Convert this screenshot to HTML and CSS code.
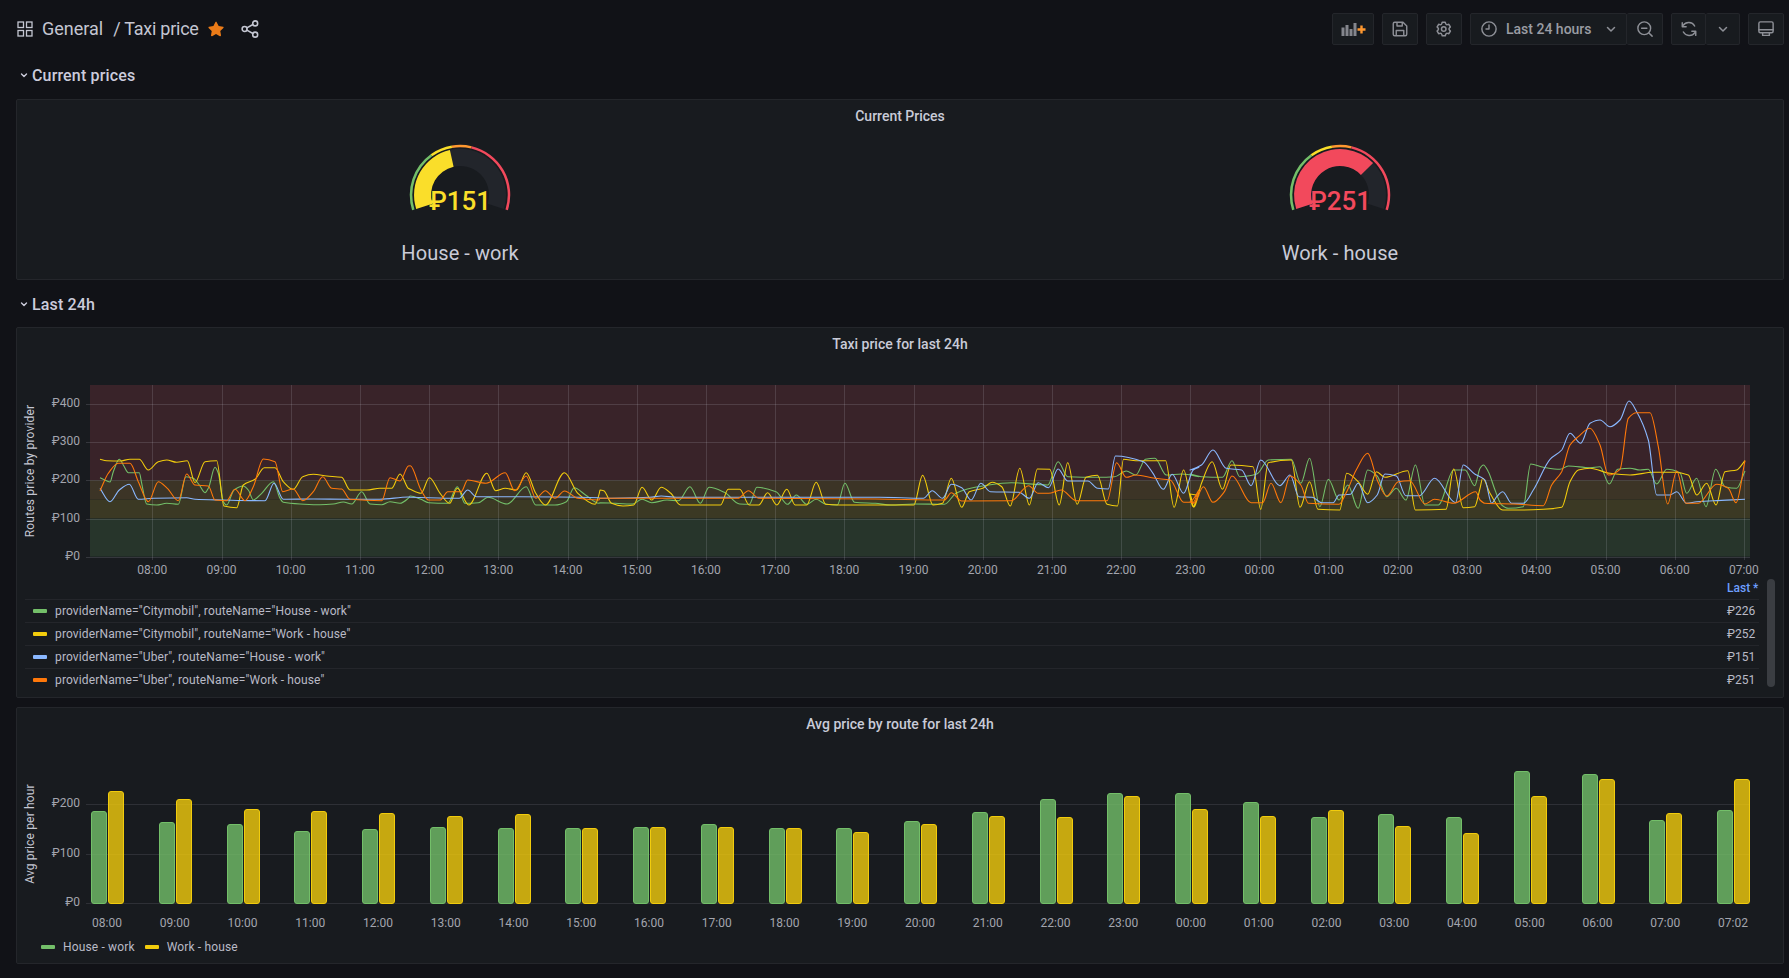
FILE: index.html
```html
<!DOCTYPE html>
<html lang="en">
<head>
<meta charset="utf-8">
<title>Taxi price - Grafana</title>
<link rel="stylesheet" href="styles.css">
</head>
<body>
<div class="page">
  <header class="topbar">
    <div class="crumbs">
      <svg class="ic crumb-ic" viewBox="0 0 16 16"><rect x="1" y="1" width="5.5" height="5.5"/><rect x="9.5" y="1" width="5.5" height="5.5"/><rect x="1" y="9.5" width="5.5" height="5.5"/><rect x="9.5" y="9.5" width="5.5" height="5.5"/></svg>
      <span class="crumb">General</span>
      <span class="crumb crumb-page">/ Taxi price</span>
      <svg class="star" viewBox="1.5 1.5 21 21"><path d="M22,10.1c0.1-0.5-0.3-1.1-0.8-1.1l-5.7-0.8L12.9,3c-0.1-0.2-0.2-0.3-0.4-0.4C12,2.3,11.4,2.5,11.1,3L8.6,8.2L2.9,9C2.6,9,2.4,9.1,2.3,9.3c-0.4,0.4-0.4,1,0,1.4l4.1,4l-1,5.7c0,0.2,0,0.4,0.1,0.6c0.3,0.5,0.9,0.7,1.4,0.4l5.1-2.7l5.1,2.7c0.1,0.1,0.3,0.1,0.5,0.1v0c0.1,0,0.1,0,0.2,0c0.5-0.1,0.9-0.6,0.8-1.2l-1-5.7l4.1-4C21.9,10.5,22,10.3,22,10.1z"/></svg>
      <svg class="ic share" viewBox="0 0 16 16"><circle cx="3.2" cy="8" r="2.2"/><circle cx="12.6" cy="3" r="2.2"/><circle cx="12.6" cy="13" r="2.2"/><path d="M5.2 7 10.6 4M5.2 9 10.6 12"/></svg>
    </div>
    <div class="tools">
      <button class="btn btn-add" type="button">
        <svg class="addpanel" viewBox="0 0 24 13"><rect class="bar-grey" x="0" y="4.5" width="3" height="8.5"/><rect class="bar-grey" x="4" y="2" width="3" height="11"/><rect class="bar-grey" x="8" y="6" width="3" height="7"/><rect class="bar-grey" x="12" y="0" width="3" height="13"/><path class="plus" d="M20 2.5v8M16 6.5h8"/></svg>
      </button>
      <button class="btn" type="button">
        <svg class="ic ic18" viewBox="0 0 24 24"><path d="M5 3h11l5 5v11a2 2 0 0 1-2 2H5a2 2 0 0 1-2-2V5a2 2 0 0 1 2-2zM8 3v5h7V3M7 21v-7h10v7"/></svg>
      </button>
      <button class="btn" type="button">
        <svg class="ic-fill ic18" viewBox="0 0 24 24"><path d="M19.9,12.66a1,1,0,0,1,0-1.32L21.18,9.9a1,1,0,0,0,.12-1.17l-2-3.46a1,1,0,0,0-1.07-.48l-1.88.38a1,1,0,0,1-1.15-.66l-.61-1.83A1,1,0,0,0,13.64,2h-4a1,1,0,0,0-1,.68L8.08,4.51a1,1,0,0,1-1.15.66L5,4.79A1,1,0,0,0,4,5.27L2,8.73A1,1,0,0,0,2.1,9.9l1.27,1.44a1,1,0,0,1,0,1.32L2.1,14.1A1,1,0,0,0,2,15.27l2,3.46a1,1,0,0,0,1.07.48l1.88-.38a1,1,0,0,1,1.15.66l.61,1.83a1,1,0,0,0,1,.68h4a1,1,0,0,0,.95-.68l.61-1.83a1,1,0,0,1,1.15-.66l1.88.38a1,1,0,0,0,1.07-.48l2-3.46a1,1,0,0,0-.12-1.17ZM18.41,14l.8.9-1.28,2.22-1.18-.24a3,3,0,0,0-3.45,2L12.92,20H10.36L10,18.86a3,3,0,0,0-3.45-2l-1.18.24L4.07,14.89l.8-.9a3,3,0,0,0,0-4l-.8-.9L5.35,6.89l1.18.24a3,3,0,0,0,3.45-2L10.36,4h2.56l.38,1.14a3,3,0,0,0,3.45,2l1.18-.24,1.28,2.22-.8.9A3,3,0,0,0,18.41,14ZM11.64,8a4,4,0,1,0,4,4A4,4,0,0,0,11.64,8Zm0,6a2,2,0,1,1,2-2A2,2,0,0,1,11.64,14Z"/></svg>
      </button>
      <div class="btn-group">
        <button class="btn btn-time" type="button">
          <svg class="ic ic18" viewBox="0 0 24 24"><circle cx="12" cy="12" r="9.5"/><path d="M12 6.5V12H8"/></svg>
          <span class="time-label">Last 24 hours</span>
          <svg class="ic chev" viewBox="0 0 12 12"><path d="M2.5 4.5 6 8l3.500-3.500"/></svg>
        </button>
        <button class="btn btn-joined" type="button">
          <svg class="ic ic18" viewBox="0 0 24 24"><circle cx="11" cy="11" r="8.5"/><path d="M7.5 11h7M17.2 17.2 21.5 21.5"/></svg>
        </button>
      </div>
      <div class="btn-group">
        <button class="btn btn-refresh" type="button">
          <svg class="ic ic18" viewBox="0 0 24 24"><path d="M19.5 8A9 9 0 0 0 4.2 7.2L3.2 8.6M3 3.5v5.4h5.2M4.5 16A9 9 0 0 0 19.8 16.8l1-1.4M21 20.5v-5.4h-5.2"/></svg>
        </button>
        <button class="btn btn-refresh btn-joined" type="button">
          <svg class="ic chev" viewBox="0 0 12 12"><path d="M2.5 4.5 6 8l3.500-3.500"/></svg>
        </button>
      </div>
      <button class="btn" type="button">
        <svg class="ic ic18" viewBox="0 0 24 24"><rect x="2.5" y="2.5" width="19" height="14.5" rx="2"/><path d="M2.5 13h19M7.5 17v3.5h9V17"/></svg>
      </button>
    </div>
  </header>

  <div class="row-title">
    <svg class="ic row-chev" viewBox="0 0 16 16"><path d="M5.5 7 8 9.5 10.500 7"/></svg>
    <span>Current prices</span>
  </div>

  <section class="panel panel-gauges">
    <h2 class="panel-title">Current Prices</h2>
    <div class="gauges">
      <div class="gauge-cell">
        <svg class="gauge" data-end="-12.7" data-color="#fade2a" viewBox="0 0 140 86">
          <text class="gauge-value gv-yellow" x="70" y="78">₽151</text>
        </svg>
        <div class="gauge-label">House - work</div>
      </div>
      <div class="gauge-cell">
        <svg class="gauge" data-end="46" data-color="#f2495c" viewBox="0 0 140 86">
          <text class="gauge-value gv-red" x="70" y="78">₽251</text>
        </svg>
        <div class="gauge-label">Work - house</div>
      </div>
    </div>
  </section>

  <div class="row-title row-second">
    <svg class="ic row-chev" viewBox="0 0 16 16"><path d="M5.5 7 8 9.5 10.500 7"/></svg>
    <span>Last 24h</span>
  </div>

  <section class="panel panel-lines">
    <h2 class="panel-title">Taxi price for last 24h</h2>
    <svg id="lines" class="chart chart-lines" viewBox="17 360 1766 216"></svg>
    <div class="legend-table">
      <div class="lg-head"><span class="lg-last">Last *</span></div>
      <div class="lg-row"><i class="swatch sw-green"></i><span class="lg-name">providerName="Citymobil", routeName="House - work"</span><span class="lg-val">₽226</span></div>
      <div class="lg-row"><i class="swatch sw-yellow"></i><span class="lg-name">providerName="Citymobil", routeName="Work - house"</span><span class="lg-val">₽252</span></div>
      <div class="lg-row"><i class="swatch sw-blue"></i><span class="lg-name">providerName="Uber", routeName="House - work"</span><span class="lg-val">₽151</span></div>
      <div class="lg-row"><i class="swatch sw-orange"></i><span class="lg-name">providerName="Uber", routeName="Work - house"</span><span class="lg-val">₽251</span></div>
    </div>
    <div class="scrollbar"></div>
  </section>

  <section class="panel panel-bars">
    <h2 class="panel-title">Avg price by route for last 24h</h2>
    <svg id="bars" class="chart chart-bars" viewBox="17 740 1766 195"></svg>
    <div class="legend-inline">
      <i class="swatch sw-green"></i><span class="li-name">House - work</span>
      <i class="swatch sw-yellow"></i><span class="li-name">Work - house</span>
    </div>
  </section>
</div>
<script src="script.js"></script>
</body>
</html>
```
FILE: styles.css
```css
* { box-sizing: border-box; }
html, body { margin: 0; height: 100%; }
body {
  background: #111217;
  color: #ccccdc;
  font-family: Roboto, "Liberation Sans", sans-serif;
  overflow: hidden;
}
.page { padding: 13px 5px 0 16px; }

/* top bar */
.topbar { display: flex; align-items: center; justify-content: space-between; height: 32px; }
.crumbs { display: flex; align-items: center; }
.crumb { font-size: 18px; line-height: 32px; color: #c4c6d2; }
.crumb + .crumb { margin-left: 10px; }
.crumb-page { letter-spacing: -.25px; }
.crumb-ic { width: 16px; height: 16px; margin: 0 9px 0 1px; }
.star { width: 16px; height: 16px; margin-left: 9px; fill: #eb7b18; }
.share { width: 18px; height: 18px; margin-left: 17px; }
.ic { fill: none; stroke: #8e9097; stroke-width: 1.3; stroke-linecap: round; stroke-linejoin: round; }
.ic.share { stroke: #c4c6d2; stroke-width: 1.4; }
.ic.crumb-ic { stroke: #c4c6d2; stroke-linecap: butt; stroke-linejoin: miter; }
.ic18 { width: 18px; height: 18px; }
.ic18.ic { stroke-width: 1.9; }
.ic-fill { fill: #8e9097; }
.tools { display: flex; gap: 8px; }
.btn {
  display: flex; align-items: center; justify-content: center;
  width: 36px; height: 32px; padding: 0;
  background: #181b1f;
  border: 1px solid #24262b;
  border-radius: 2px;
  font-family: inherit;
}
.btn-add { width: 42px; }
.addpanel { width: 25px; height: 13px; }
.bar-grey { fill: #84868d; }
.plus { fill: none; stroke: #ff9830; stroke-width: 2.4; }
.btn-group { display: flex; }
.btn-joined { border-left: 0; }
.btn-time { width: 157px; justify-content: flex-start; padding-left: 9px; }
.time-label { margin-left: 8px; width: 99px; text-align: left; font-size: 14px; font-weight: 500; color: #9a9ca3; }
.chev { width: 12px; height: 12px; stroke-width: 1.5; }
.btn-refresh { width: 35px; }
.btn-refresh + .btn-refresh { width: 34px; }

/* rows */
.row-title {
  display: flex; align-items: center;
  height: 28px; margin: 16px 0 10px;
  font-size: 16px; font-weight: 500; letter-spacing: .15px; color: #ccccdc;
}
.row-second { margin: 10px 0 9px; }
.ic.row-chev { width: 16px; height: 16px; stroke: #ccccdc; stroke-width: 1.4; }

/* panels */
.panel {
  position: relative;
  background: #181b1f;
  border: 1px solid #24262b;
  border-radius: 2px;
}
.panel-title {
  margin: 0; height: 32px;
  font-size: 14px; font-weight: 500; line-height: 32px; text-align: center; color: #c9cbd8;
}
.panel-gauges { height: 181px; }
.panel-lines { height: 371px; margin-bottom: 9px; }
.panel-bars { height: 257px; }

.gauges { display: grid; grid-template-columns: 1fr 1fr; padding: 0 3px; }
.gauge-cell { display: flex; flex-direction: column; align-items: center; }
.gauge { display: block; width: 140px; height: 86px; }
.gauge-value { font-size: 26px; font-weight: 500; text-anchor: middle; }
.gv-yellow { fill: #fade2a; }
.gv-red { fill: #f2495c; }
.gauge-track { fill: #22252b; }
.gauge-label { margin-top: 20px; font-size: 20px; line-height: 30px; letter-spacing: .08px; color: #c9cbd8; }

/* charts */
.chart { display: block; width: 1766px; }
.chart-lines { height: 216px; }
.chart-bars { height: 195px; }
.grid { stroke: rgba(204,204,220,.16); stroke-width: 1; }
.grid-bars { stroke: rgba(204,204,220,.12); }
.axis { font-size: 12px; fill: #a3a5ae; }
.axis-y { text-anchor: end; }
.axis-x { text-anchor: middle; }
.axis-title { font-size: 12px; letter-spacing: .17px; fill: #c4c6d2; text-anchor: middle; }
.band-red { fill: #392329; }
.band-orange { fill: #3c3426; }
.band-yellow { fill: #3b3924; }
.band-green { fill: #27352b; }
.line { fill: none; stroke-width: 1.1; stroke-linejoin: round; }
.s-green { stroke: #73bf69; }
.s-yellow { stroke: #f2cc0c; }
.s-blue { stroke: #8ab8ff; }
.s-orange { stroke: #ff780a; }
.bar { stroke-width: 1; }
.bar-g { fill: rgba(115,191,105,.8); stroke: #73bf69; }
.bar-y { fill: rgba(242,204,12,.8); stroke: #f2cc0c; }

/* legends */
.legend-table { margin: 0 24px 0 8px; font-size: 12px; }
.lg-head { display: flex; justify-content: flex-end; align-items: center; height: 23px; }
.lg-last { width: 32px; font-weight: 500; color: #6e9fff; white-space: nowrap; }
.lg-row {
  display: flex; align-items: center; height: 23px;
  border-top: 1px solid #24262b;
  color: #b9bac6;
}
.lg-name { flex: 1; margin-left: 8px; letter-spacing: .14px; }
.lg-val { width: 32px; }
.swatch { display: block; width: 14px; height: 4px; border-radius: 1px; flex: none; }
.lg-row .swatch { margin-left: 8px; }
.sw-green { background: #73bf69; }
.sw-yellow { background: #f2cc0c; }
.sw-blue { background: #8ab8ff; }
.sw-orange { background: #ff780a; }
.scrollbar {
  position: absolute; left: 1750px; top: 251px;
  width: 8px; height: 108px;
  border-radius: 4px;
  background: #3a3d42;
}
.legend-inline { display: flex; align-items: center; height: 24px; padding-left: 24px; font-size: 12px; letter-spacing: .15px; color: #b9bac6; }
.li-name { margin: 0 10px 0 8px; }
```
FILE: script.js
```js
const NS = 'http://www.w3.org/2000/svg';
function el(parent, tag, attrs, text) {
  const n = document.createElementNS(NS, tag);
  for (const k in attrs) n.setAttribute(k, attrs[k]);
  if (text !== undefined) n.textContent = text;
  parent.appendChild(n);
  return n;
}
function fx(v) { return v.toFixed(1); }

/* gauges */
function polar(r, deg) {
  const a = (deg - 90) * Math.PI / 180;
  return [70 + r * Math.cos(a), 63 + r * Math.sin(a)];
}
function band(r0, r1, a0, a1) {
  const large = a1 - a0 > 180 ? 1 : 0;
  const p = [polar(r1, a0), polar(r1, a1), polar(r0, a1), polar(r0, a0)];
  return 'M' + fx(p[0][0]) + ' ' + fx(p[0][1]) +
    'A' + r1 + ' ' + r1 + ' 0 ' + large + ' 1 ' + fx(p[1][0]) + ' ' + fx(p[1][1]) +
    'L' + fx(p[2][0]) + ' ' + fx(p[2][1]) +
    'A' + r0 + ' ' + r0 + ' 0 ' + large + ' 0 ' + fx(p[3][0]) + ' ' + fx(p[3][1]) + 'Z';
}
const START = -107.6, FINISH = 107.6;
document.querySelectorAll('.gauge').forEach(function (svg) {
  const text = svg.querySelector('text');
  const g = document.createElementNS(NS, 'g');
  svg.insertBefore(g, text);
  el(g, 'path', { d: band(29, 46, START, FINISH), class: 'gauge-track' });
  el(g, 'path', { d: band(29, 46, START, parseFloat(svg.dataset.end)), fill: svg.dataset.color });
  [[START, -35.7, '#73bf69'], [-35.7, -9.5, '#fade2a'], [-9.5, 13.6, '#ff9830'], [13.6, FINISH, '#f2495c']]
    .forEach(function (s) { el(g, 'path', { d: band(47.7, 50.2, s[0], s[1]), fill: s[2] }); });
});

/* time series: traced points, grouped by the x/y scale they were read at */
const A = [80, 430, 3, 3], B = [0, 320, 2.613, 3], C = [600, 370, 2.613, 3], D = [1190, 370, 2.617, 3], E = [1480, 390, 3, 3];
const SERIES = [
  ['s-green', [
    [A, [60,143,70,148,90,156,100,125,118,88,130,105,145,128,178,128,185,160,200,222,230,225,260,220,295,223,318,140,340,145,358,165,375,188,385,175,405,112,415,130,430,215,440,225,462,180,490,168,505,180,520,210,545,190,580,155,600,205,610,217,660,222,720,224,760,222,790,216,815,222,845,185,870,222,905,224,930,215,960,220,985,205]],
    [B, [1072,528,1100,538,1120,548,1170,550,1195,500,1215,550,1250,548,1275,532,1325,552,1375,500,1400,555,1450,555,1480,545,1500,503,1530,525,1565,550]],
    [C, [0,398,40,400,85,402,110,388,135,398,175,390,205,392,235,350,262,400,285,352,325,367,365,402,390,403,410,352,460,365,490,403,513,375,540,403,565,388,590,403,620,405,640,340,665,397,720,400,760,405,820,402,900,403,930,370,960,357,1000,348,1075,338,1170,345,1197,275,1222,320,1300,322,1345,320,1375,303,1400,315,1425,268,1450,265,1480,315,1520,312,1565,320]],
    [D, [0,312,30,320,85,322,110,272,130,320,175,312,205,270,265,268,290,340,313,265,340,410,362,328,390,390,413,345,440,415,465,300,490,318,515,380,540,355,565,390,590,285,615,405,650,405,690,300,720,300,745,347]],
    [E, [0,235,10,225,25,245,45,300,65,345,85,355,130,350,152,222,190,232,240,238,265,228,330,233,360,230,388,282,413,238,450,235,480,240,505,238,530,282,560,238,600,248,620,310,650,265,678,350,707,238,735,290,770,295,795,243]]
  ]],
  ['s-yellow', [
    [A, [60,88,80,92,120,93,150,88,178,88,205,120,235,95,260,90,290,97,322,92,345,158,375,95,410,92,432,228,470,233,490,165,525,148,553,113,585,113,610,155,640,178,668,140,700,133,740,138,785,142,810,180,860,180,900,175,935,175,960,132,985,175]],
    [B, [1072,508,1100,520,1122,473,1150,520,1175,550,1195,505,1225,555,1272,460,1295,512,1320,505,1350,510,1375,458,1400,520,1425,555,1475,458,1510,520,1555,553,1566,520]],
    [C, [0,360,10,362,30,400,60,408,88,405,110,352,135,390,160,352,185,370,210,405,315,405,335,358,365,358,390,405,415,405,438,368,462,405,488,358,510,405,540,405,565,337,590,403,625,405,820,405,843,316,870,405,895,400,918,325,945,412,965,365,1000,355,1025,337,1050,350,1072,408,1097,295,1122,405,1143,297,1175,298,1200,405,1222,278,1247,403,1270,322,1300,316,1325,403,1352,408,1368,268,1400,272,1478,272,1500,412,1525,300,1550,410,1565,375]],
    [D, [0,372,10,412,30,340,58,275,85,358,107,285,165,290,185,418,205,278,265,270,288,412,313,335,335,418,392,420,410,310,440,335,465,373,488,305,510,322,570,302,590,420,670,418,690,297,715,413,745,410]],
    [E, [0,295,8,265,30,310,68,360,120,360,190,358,245,352,270,275,295,240,330,235,390,250,450,255,520,247,585,247,625,255,650,315,680,280,708,345,735,245,770,240,795,212]]
  ]],
  ['s-blue', [
    [A, [60,175,90,215,118,180,148,163,175,208,220,205,320,203,345,208,430,210,555,212,582,160,610,208,700,207,800,208,900,208,985,201]],
    [B, [1072,532,1120,533,1200,535,1222,510,1245,530,1350,530,1565,533]],
    [C, [0,385,130,382,160,378,200,382,330,382,540,382,730,382,845,385,868,362,895,385,918,343,945,353,970,390,995,340,1020,365,1095,367,1122,385,1145,338,1172,353,1197,297,1222,333,1275,333,1300,355,1328,357,1347,258,1420,275,1445,310,1472,358,1495,313,1525,370,1550,300,1565,292]],
    [D, [0,300,30,285,60,240,95,295,135,300,160,347,185,270,235,347,262,315,285,380,320,382,345,398,375,398,390,375,420,373,440,340,465,398,490,375,510,312,540,318,565,377,600,377,640,325,695,398,715,285,745,312]],
    [E, [0,260,15,270,35,340,50,320,68,305,95,340,130,340,160,300,210,208,245,180,270,130,302,160,330,100,360,90,390,110,420,90,447,33,470,65,505,150,530,315,570,315,590,305,620,340,650,335,700,332,795,328]]
  ]],
  ['s-orange', [
    [A, [60,182,85,130,115,100,150,100,175,155,205,215,235,155,262,175,295,212,320,132,345,165,385,168,405,210,440,212,465,178,495,212,520,170,550,87,585,95,608,185,640,177,668,212,700,185,728,140,755,175,785,177,810,208,905,212,930,143,960,153,985,108]],
    [B, [1072,437,1100,510,1120,540,1150,540,1170,515,1205,515,1222,480,1270,490,1320,458,1345,512,1375,468,1400,535,1425,512,1450,535,1475,513,1510,535,1565,540]],
    [C, [0,385,360,385,388,362,415,385,720,387,900,390,918,368,945,393,1075,392,1120,347,1145,370,1172,370,1205,360,1245,392,1325,392,1350,278,1375,322,1400,315,1450,325,1490,330,1525,397,1550,397,1565,360]],
    [D, [0,395,10,400,35,350,60,397,90,365,110,318,160,398,190,398,212,340,238,398,262,318,290,345,310,400,390,403,410,365,435,300,465,250,490,330,515,378,545,335,575,332,615,402,640,388,690,400,748,365]],
    [E, [0,330,15,340,100,342,190,347,215,285,245,245,270,165,295,140,330,115,360,165,385,255,420,238,445,85,470,68,510,68,535,170,563,342,590,243,618,340,655,340,710,283,745,295,768,338,795,212]]
  ]]
];
function toPoints(chunks) {
  const out = [];
  chunks.forEach(function (c) {
    const s = c[0], d = c[1];
    for (let i = 0; i < d.length; i += 2) out.push([s[0] + d[i] / s[2], s[1] + d[i + 1] / s[3]]);
  });
  return out;
}
function monotonePath(p) {
  const n = p.length, dx = [], sl = [], m = [];
  for (let i = 0; i < n - 1; i++) {
    dx[i] = p[i + 1][0] - p[i][0];
    sl[i] = (p[i + 1][1] - p[i][1]) / dx[i];
  }
  m[0] = sl[0]; m[n - 1] = sl[n - 2];
  for (let i = 1; i < n - 1; i++) {
    m[i] = sl[i - 1] * sl[i] <= 0 ? 0 : 2 * sl[i - 1] * sl[i] / (sl[i - 1] + sl[i]);
  }
  let d = 'M' + fx(p[0][0]) + ' ' + fx(p[0][1]);
  for (let i = 0; i < n - 1; i++) {
    const h = dx[i] / 3;
    d += 'C' + fx(p[i][0] + h) + ' ' + fx(p[i][1] + m[i] * h) + ' ' +
      fx(p[i + 1][0] - h) + ' ' + fx(p[i + 1][1] - m[i + 1] * h) + ' ' +
      fx(p[i + 1][0]) + ' ' + fx(p[i + 1][1]);
  }
  return d;
}

const HOURS = ['08','09','10','11','12','13','14','15','16','17','18','19','20','21','22','23','00','01','02','03','04','05','06','07'];

/* line chart */
(function () {
  const svg = document.getElementById('lines');
  const L = 90, R = 1750, T = 385, Y0 = 556.6, K = 0.381;
  const y = function (v) { return Y0 - v * K; };
  [['band-red', T, y(200)], ['band-orange', y(200), y(150)], ['band-yellow', y(150), y(100)], ['band-green', y(100), Y0]]
    .forEach(function (b) { el(svg, 'rect', { class: b[0], x: L, y: b[1], width: R - L, height: b[2] - b[1] }); });
  [0, 100, 200, 300, 400].forEach(function (v) {
    const yy = Math.round(y(v)) + 0.5;
    el(svg, 'line', { class: 'grid', x1: 86, x2: R, y1: yy, y2: yy });
    el(svg, 'text', { class: 'axis axis-y', x: 80, y: y(v) + 3 }, '₽' + v);
  });
  HOURS.forEach(function (h, i) {
    const x = 152.3 + 69.2 * i;
    el(svg, 'line', { class: 'grid', x1: Math.round(x) + 0.5, x2: Math.round(x) + 0.5, y1: T, y2: 560 });
    el(svg, 'text', { class: 'axis axis-x', x: x, y: 573.5 }, h + ':00');
  });
  el(svg, 'text', { class: 'axis-title', transform: 'translate(34 471) rotate(-90)' }, 'Routes price by provider');
  SERIES.forEach(function (s) {
    el(svg, 'path', { class: 'line ' + s[0], d: monotonePath(toPoints(s[1])) });
  });
})();

/* bar chart: bar tops as read on the y scale */
(function () {
  const svg = document.getElementById('bars');
  const TOPS = [[333,273],[366,297],[372,327],[393,333],[387,339],[381,348],[384,342],[384,384],[382,382],[372,382],[385,385],[385,395],[364,371],[337,347],[296,350],[279,288],[280,327],[306,348],[351,330],[342,378],[351,399],[213,288],[222,237],[360,339],[330,237]];
  const Y0 = 903.5, R = 1750;
  [[0, 903.5], [100, 854.5], [200, 804.5]].forEach(function (g) {
    el(svg, 'line', { class: 'grid grid-bars', x1: 86, x2: R, y1: g[1], y2: g[1] });
    el(svg, 'text', { class: 'axis axis-y', x: 80, y: g[1] + 2.5 }, '₽' + g[0]);
  });
  el(svg, 'text', { class: 'axis-title', transform: 'translate(34 834) rotate(-90)' }, 'Avg price per hour');
  const labels = HOURS.map(function (h) { return h + ':00'; }).concat('07:02');
  TOPS.forEach(function (t, i) {
    const c = 107 + 67.75 * i, x0 = Math.round(c - 16) + 0.5, x1 = Math.round(c + 1) + 0.5;
    const yg = Math.round(700 + t[0] / 3) + 0.5, yy = Math.round(700 + t[1] / 3) + 0.5;
    el(svg, 'rect', { class: 'bar bar-g', x: x0, y: yg, width: 15, height: Y0 - yg, rx: 2.5 });
    el(svg, 'rect', { class: 'bar bar-y', x: x1, y: yy, width: 15, height: Y0 - yy, rx: 2.5 });
    el(svg, 'text', { class: 'axis axis-x', x: c, y: 926.5 }, labels[i]);
  });
})();
```
